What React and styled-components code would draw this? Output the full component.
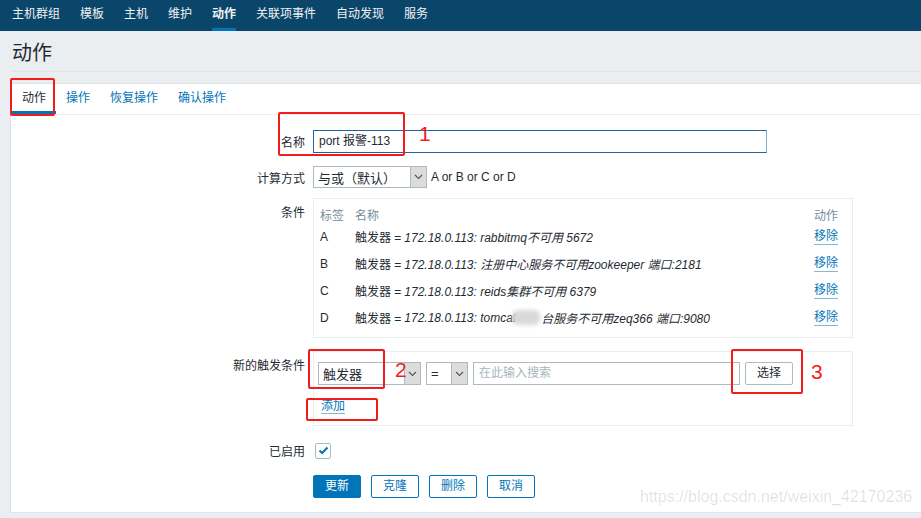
import React from "react";
import styled, { createGlobalStyle } from "styled-components";

const GlobalStyle = createGlobalStyle`
  html, body {
    margin: 0;
    padding: 0;
    background: #ebeef0;
    font-family: "Liberation Sans", "Noto Sans CJK SC", Arial, sans-serif;
    font-size: 12px;
    color: #1f2c33;
  }
`;

const conditions = [
  { tag: "A", text: "172.18.0.113: rabbitmq不可用 5672" },
  { tag: "B", text: "172.18.0.113: 注册中心服务不可用zookeeper 端口:2181" },
  { tag: "C", text: "172.18.0.113: reids集群不可用 6379" },
  { tag: "D", text: "172.18.0.113: tomcat", blur: true, rest: "台服务不可用zeq366 端口:9080" },
];

const navItems = ["主机群组", "模板", "主机", "维护", "动作", "关联项事件", "自动发现", "服务"];

const Chevron = () => (
  <svg width="9" height="6" viewBox="0 0 9 6">
    <polyline points="1,1 4.5,4.5 8,1" fill="none" stroke="#555" strokeWidth="1.1" />
  </svg>
);

const App = () => {
  return (
    <Page>
      <GlobalStyle />
      <Nav>
        {navItems.map((n) => (
          <NavItem key={n} $active={n === "动作"}>
            {n}
          </NavItem>
        ))}
      </Nav>
      <Header>
        <Title>动作</Title>
      </Header>
      <Card>
        <Tabs>
          <Tab $active>动作</Tab>
          <Tab>操作</Tab>
          <Tab>恢复操作</Tab>
          <Tab>确认操作</Tab>
        </Tabs>
        <Form>
          <FormRow $gap={15}>
            <Label>名称</Label>
            <TextInput>port 报警-113</TextInput>
          </FormRow>
          <FormRow $gap={13}>
            <Label>计算方式</Label>
            <Inline>
              <Select $width={114}>
                <SelectText>与或（默认）</SelectText>
                <Arrow>
                  <Chevron />
                </Arrow>
              </Select>
              <span>A or B or C or D</span>
            </Inline>
          </FormRow>
          <FormRow $gap={10}>
            <Label $top>条件</Label>
            <Box>
              <CondTable>
                <HeadCell>标签</HeadCell>
                <HeadCell>名称</HeadCell>
                <HeadCell>动作</HeadCell>
                {conditions.map((c) => (
                  <React.Fragment key={c.tag}>
                    <Cell>{c.tag}</Cell>
                    <Cell>
                      触发器 = <Italic>{c.text}</Italic>
                      {c.blur && (
                        <>
                          <Blur />
                          <Italic>{c.rest}</Italic>
                        </>
                      )}
                    </Cell>
                    <Cell>
                      <Link>移除</Link>
                    </Cell>
                  </React.Fragment>
                ))}
              </CondTable>
            </Box>
          </FormRow>
          <FormRow $gap={13}>
            <Label $top>新的触发条件</Label>
            <NewBox>
              <Inline $gap={5}>
                <Select $width={103} $height={23}>
                  <SelectText>触发器</SelectText>
                  <Arrow>
                    <Chevron />
                  </Arrow>
                </Select>
                <Select $width={42} $height={23}>
                  <SelectText>=</SelectText>
                  <Arrow>
                    <Chevron />
                  </Arrow>
                </Select>
                <SearchInput>在此输入搜索</SearchInput>
                <Button>选择</Button>
              </Inline>
              <AddRow>
                <Link>添加</Link>
              </AddRow>
            </NewBox>
          </FormRow>
          <FormRow $gap={16}>
            <Label>已启用</Label>
            <Checkbox>
              <svg width="11" height="9" viewBox="0 0 11 9">
                <polyline points="1.5,4.5 4.2,7 9.5,1.5" fill="none" stroke="#0275b8" strokeWidth="2" />
              </svg>
            </Checkbox>
          </FormRow>
          <FormRow $gap={16}>
            <span />
            <Inline $gap={10}>
              <Button $primary>更新</Button>
              <Button $outline>克隆</Button>
              <Button $outline>删除</Button>
              <Button $outline>取消</Button>
            </Inline>
          </FormRow>
        </Form>
      </Card>
      <Mark style={{ left: 10, top: 78, width: 41, height: 34 }} />
      <Mark style={{ left: 278, top: 112, width: 123, height: 40 }} />
      <Num style={{ left: 419, top: 122 }}>1</Num>
      <Mark style={{ left: 308, top: 349, width: 73, height: 36 }} />
      <Num style={{ left: 395, top: 358 }}>2</Num>
      <Mark style={{ left: 731, top: 349, width: 68, height: 41 }} />
      <Num style={{ left: 811, top: 360 }}>3</Num>
      <Mark style={{ left: 306, top: 398, width: 68, height: 19 }} />
      <Watermark>https://blog.csdn.net/weixin_42170236</Watermark>
    </Page>
  );
};

const Page = styled.div`
  position: relative;
  width: 921px;
  height: 518px;
  overflow: hidden;
  background: #ebeef0;
`;
const Nav = styled.div`
  height: 31px;
  background: #0a466a;
  display: flex;
  gap: 20px;
  padding-left: 12px;
`;
const NavItem = styled.div`
  color: #f2f2f2;
  line-height: 28px;
  border-bottom: 3px solid ${(p) => (p.$active ? "#0275b8" : "transparent")};
  font-weight: ${(p) => (p.$active ? "bold" : "normal")};
`;
const Header = styled.div`
  height: 40px;
  margin-left: 12px;
  border-bottom: 1px solid #dfe4e7;
  display: flex;
  align-items: center;
`;
const Title = styled.h1`
  margin: 0;
  font-size: 20px;
  font-weight: normal;
  color: #1f2c33;
`;
const Card = styled.div`
  margin: 11px 0 0 10px;
  border: 1px solid #dfe4e7;
  border-right: none;
  background: #fff;
  padding-bottom: 14px;
`;
const Tabs = styled.div`
  display: flex;
  height: 30px;
  padding-left: 1px;
  border-bottom: 1px solid #ebeef0;
`;
const Tab = styled.div`
  padding: 0 10px;
  line-height: 28px;
  border-bottom: 3px solid ${(p) => (p.$active ? "#0275b8" : "transparent")};
  color: ${(p) => (p.$active ? "#1f2c33" : "#0275b8")};
`;
const Form = styled.div`
  display: flex;
  flex-direction: column;
`;
const FormRow = styled.div`
  display: grid;
  grid-template-columns: 294px auto;
  column-gap: 8px;
  margin-top: ${(p) => p.$gap}px;
  align-items: center;
`;
const Label = styled.div`
  text-align: right;
  align-self: ${(p) => (p.$top ? "start" : "center")};
  padding-top: ${(p) => (p.$top ? "5px" : "0")};
  color: #1f2c33;
`;
const TextInput = styled.div`
  box-sizing: border-box;
  width: 454px;
  height: 23px;
  border: 1px solid #1f65a6;
  border-right-color: #7fb0d6;
  padding: 0 5px;
  line-height: 21px;
  color: #1f2c33;
`;
const Inline = styled.div`
  display: flex;
  align-items: center;
  gap: ${(p) => p.$gap ?? 4}px;
`;
const Select = styled.div`
  box-sizing: border-box;
  width: ${(p) => p.$width}px;
  height: ${(p) => p.$height ?? 22}px;
  border: 1px solid #acbbc2;
  display: flex;
  background: #fff;
`;
const SelectText = styled.div`
  flex: 1;
  padding-left: 4px;
  display: flex;
  align-items: center;
  font-size: 13px;
`;
const Arrow = styled.div`
  width: 15px;
  background: #dcdcdc;
  border-left: 1px solid #acbbc2;
  display: flex;
  align-items: center;
  justify-content: center;
`;
const Box = styled.div`
  box-sizing: border-box;
  width: 540px;
  border: 1px solid #ebeef0;
  padding: 6px 14px 6px 6px;
`;
const CondTable = styled.div`
  display: grid;
  grid-template-columns: 35px 1fr auto;
  grid-auto-rows: 27px;
  grid-template-rows: 18px;
`;
const HeadCell = styled.div`
  color: #768d99;
  display: flex;
  align-items: center;
`;
const Cell = styled.div`
  display: flex;
  align-items: center;
  white-space: nowrap;
`;
const Italic = styled.i`
  margin-left: 3px;
  color: #1f2c33;
`;
const Blur = styled.span`
  display: inline-block;
  width: 28px;
  height: 15px;
  margin: 0 -2px 0 -4px;
  background: #d9d9d9;
  border-radius: 6px;
  filter: blur(2px);
`;
const Link = styled.span`
  color: #0275b8;
  border-bottom: 1px solid rgba(2, 117, 184, 0.5);
  line-height: 15px;
`;
const NewBox = styled.div`
  box-sizing: border-box;
  width: 540px;
  height: 75px;
  border: 1px solid #ebeef0;
  padding: 10px 5px 0 4px;
`;
const SearchInput = styled.div`
  box-sizing: border-box;
  width: 267px;
  height: 23px;
  border: 1px solid #acbbc2;
  padding-left: 5px;
  line-height: 21px;
  color: #aab5ba;
`;
const Button = styled.div`
  box-sizing: border-box;
  height: 23px;
  line-height: 21px;
  padding: 0 11px;
  border: 1px solid ${(p) => (p.$primary || p.$outline ? "#0275b8" : "#acbbc2")};
  border-radius: 2px;
  background: ${(p) => (p.$primary ? "#0275b8" : "#fff")};
  color: ${(p) => (p.$primary ? "#fff" : p.$outline ? "#0275b8" : "#1f2c33")};
`;
const AddRow = styled.div`
  margin-top: 14px;
  padding-left: 3px;
`;
const Checkbox = styled.div`
  box-sizing: border-box;
  width: 16px;
  height: 16px;
  margin-left: 2px;
  border: 1px solid #acbbc2;
  border-radius: 2px;
  display: flex;
  align-items: center;
  justify-content: center;
`;
const Mark = styled.div`
  position: absolute;
  border: 2px solid #f21c1c;
  border-radius: 2px;
`;
const Num = styled.div`
  position: absolute;
  color: #f21c1c;
  font-size: 21px;
  line-height: 24px;
`;
const Watermark = styled.div`
  position: absolute;
  left: 640px;
  top: 488px;
  font-size: 16px;
  color: rgba(0, 0, 0, 0.12);
`;

export default App;
